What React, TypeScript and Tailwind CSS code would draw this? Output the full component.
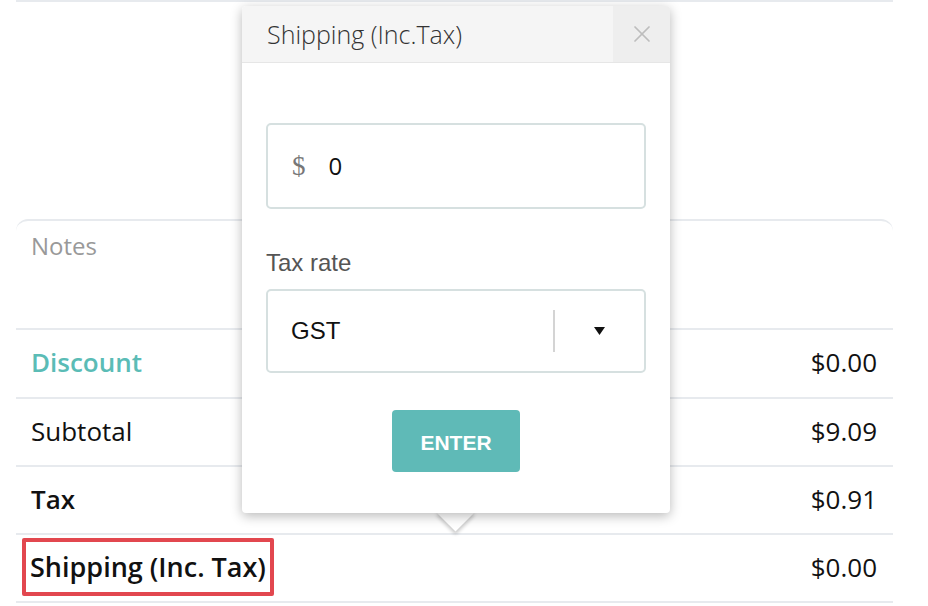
import { X } from "lucide-react";

const open = { fontFamily: '"Open Sans", "Liberation Sans", sans-serif' };
const helv = { fontFamily: '"Liberation Sans", Arial, sans-serif' };

function Row({ label, value, className = "" }: { label: React.ReactNode; value: string; className?: string }) {
  return (
    <div className={`flex h-[68px] items-center justify-between border-t-2 border-[#e7eaee] pb-[2px] pl-[15px] pr-[16px] text-[26px] ${className}`}>
      <div>{label}</div>
      <div className="text-[#111]">{value}</div>
    </div>
  );
}

function ShippingPopover() {
  return (
    <div className="absolute left-[242px] top-[6px] w-[428px] h-[507px]">
      {/* pointer */}
      <div className="absolute left-[200px] bottom-[-13px] h-[27px] w-[27px] rotate-45 bg-white shadow-[2px_2px_4px_rgba(0,0,0,0.22)]" />
      <div className="relative flex h-full flex-col rounded-[4px] bg-white shadow-[0_3px_12px_rgba(0,0,0,0.28)]">
        <div className="flex h-[57px] items-stretch rounded-t-[4px] border-b border-[#e6e6e6] bg-[#f5f5f5]">
          <div className="flex flex-1 items-center pl-[25px] pt-[2px] text-[25px] font-light text-[#333]" style={open}>
            Shipping (Inc.Tax)
          </div>
          <div className="flex w-[57px] items-center justify-center rounded-tr-[4px] bg-[#eeeeee] text-[#bdbdbd]">
            <X size={28} strokeWidth={1.5} />
          </div>
        </div>
        <div className="flex flex-col px-[24px] pt-[60px]">
          <div className="flex h-[86px] items-center rounded-[5px] border-2 border-[#d6e0e0] pl-[24px]">
            <span className="text-[27px] text-[#777]" style={{ fontFamily: '"Liberation Serif", serif' }}>$</span>
            <span className="ml-[23px] text-[24px] text-[#111]" style={open}>0</span>
          </div>
          <div className="mt-[40px] text-[24px] leading-[28px] text-[#555]" style={helv}>Tax rate</div>
          <div className="mt-[12px] flex h-[84px] items-center rounded-[5px] border-2 border-[#d6e0e0]" style={helv}>
            <div className="flex-1 pl-[23px] text-[24px] text-[#111]">GST</div>
            <div className="h-[42px] w-[2px] bg-[#d4d4d4]" />
            <div className="flex w-[89px] items-center justify-center">
              <svg width="11" height="8" viewBox="0 0 11 8"><path d="M0 0h11L5.5 8z" fill="#111" /></svg>
            </div>
          </div>
          <div className="mt-[37px] flex justify-center">
            <button type="button" className="h-[62px] w-[128px] rounded-[4px] bg-[#5fbab7] pt-[4px] text-[21px] font-bold text-white" style={helv}>
              ENTER
            </button>
          </div>
        </div>
      </div>
    </div>
  );
}

export default function App() {
  return (
    <div className="relative h-[606px] w-[928px] overflow-hidden bg-white text-[#111]" style={open}>
      <div className="ml-[16px] w-[877px]">
        <div className="h-[2px] bg-[#e7eaee]" />
        <div className="h-[217px]" />
        <div className="h-[109px] rounded-t-[12px] border-t-2 border-[#e7eaee] pl-[15px] pt-[7px] text-[24px] text-[#999]">
          Notes
        </div>
        <Row label={<span className="font-semibold text-[#5bbcb6]">Discount</span>} value="$0.00" className="h-[69px]" />
        <Row label="Subtotal" value="$9.09" />
        <Row label={<span className="font-semibold">Tax</span>} value="$0.91" />
        <Row
          label={
            <span className="-ml-[9px] inline-block rounded-[2px] border-4 border-[#e2474f] px-[4px] text-[27px] leading-[50px] font-semibold">
              Shipping (Inc. Tax)
            </span>
          }
          value="$0.00"
        />
        <div className="h-[2px] bg-[#e7eaee]" />
      </div>
      <ShippingPopover />
    </div>
  );
}
